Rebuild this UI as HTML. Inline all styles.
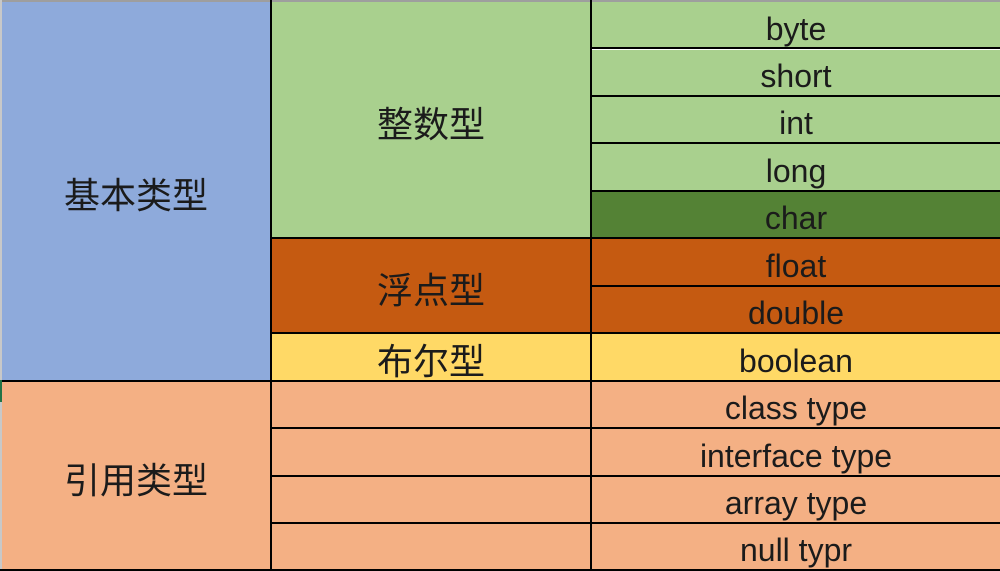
<!DOCTYPE html>
<html><head><meta charset="utf-8"><style>
body{margin:0;width:1000px;height:571px;overflow:hidden;background:#fff;position:relative;font-family:"Liberation Sans","Noto Sans CJK SC",sans-serif;color:#1b1b1b}
.c{position:absolute;display:flex;align-items:center;justify-content:center;box-sizing:border-box}
.t{font-size:32px;padding-top:8px}
.z{font-size:36px;padding-top:4px}
.h{position:absolute;height:2px;background:#000}
.v{position:absolute;width:2px;background:#000}
</style></head><body>
<div style="position:absolute;left:0;top:0;width:1000px;height:2px;background:#9e9e9e"></div>
<div style="position:absolute;left:0;top:0;width:2px;height:571px;background:#c8c8c8"></div>
<div style="position:absolute;left:0;top:380px;width:3px;height:22px;background:#217346"></div>
<div class="c z" style="left:2px;top:2px;width:268px;height:378px;background:#8eaadb">基本类型</div>
<div class="c z" style="left:2px;top:382px;width:268px;height:187px;background:#f4b084">引用类型</div>
<div class="c z" style="left:272px;top:2px;width:318px;height:235px;background:#a9d08e">整数型</div>
<div class="c z" style="left:272px;top:239px;width:318px;height:93px;background:#c55a11">浮点型</div>
<div class="c z" style="left:272px;top:334px;width:318px;height:46px;background:#ffd966">布尔型</div>
<div class="c" style="left:272px;top:382px;width:318px;height:187px;background:#f4b084"></div>
<div class="c t" style="left:592px;top:2px;width:408px;height:46px;background:#a9d08e">byte</div>
<div class="c t" style="left:592px;top:50px;width:408px;height:45px;background:#a9d08e">short</div>
<div class="c t" style="left:592px;top:97px;width:408px;height:45px;background:#a9d08e">int</div>
<div class="c t" style="left:592px;top:144px;width:408px;height:46px;background:#a9d08e">long</div>
<div class="c t" style="left:592px;top:192px;width:408px;height:45px;background:#548235">char</div>
<div class="c t" style="left:592px;top:239px;width:408px;height:46px;background:#c55a11">float</div>
<div class="c t" style="left:592px;top:287px;width:408px;height:45px;background:#c55a11">double</div>
<div class="c t" style="left:592px;top:334px;width:408px;height:46px;background:#ffd966">boolean</div>
<div class="c t" style="left:592px;top:382px;width:408px;height:45px;background:#f4b084">class type</div>
<div class="c t" style="left:592px;top:429px;width:408px;height:46px;background:#f4b084">interface type</div>
<div class="c t" style="left:592px;top:477px;width:408px;height:45px;background:#f4b084">array type</div>
<div class="c t" style="left:592px;top:524px;width:408px;height:45px;background:#f4b084">null typr</div>
<div class="v" style="left:270px;top:0;height:571px"></div>
<div class="v" style="left:590px;top:0;height:571px"></div>
<div class="h" style="left:590px;top:47px;width:410px"></div>
<div class="h" style="left:590px;top:95px;width:410px"></div>
<div class="h" style="left:590px;top:142px;width:410px"></div>
<div class="h" style="left:590px;top:190px;width:410px"></div>
<div class="h" style="left:270px;top:237px;width:730px"></div>
<div class="h" style="left:590px;top:285px;width:410px"></div>
<div class="h" style="left:270px;top:332px;width:730px"></div>
<div class="h" style="left:2px;top:380px;width:998px"></div>
<div class="h" style="left:270px;top:427px;width:730px"></div>
<div class="h" style="left:270px;top:475px;width:730px"></div>
<div class="h" style="left:270px;top:522px;width:730px"></div>
<div class="h" style="left:0;top:569px;width:1000px"></div>
</body></html>
